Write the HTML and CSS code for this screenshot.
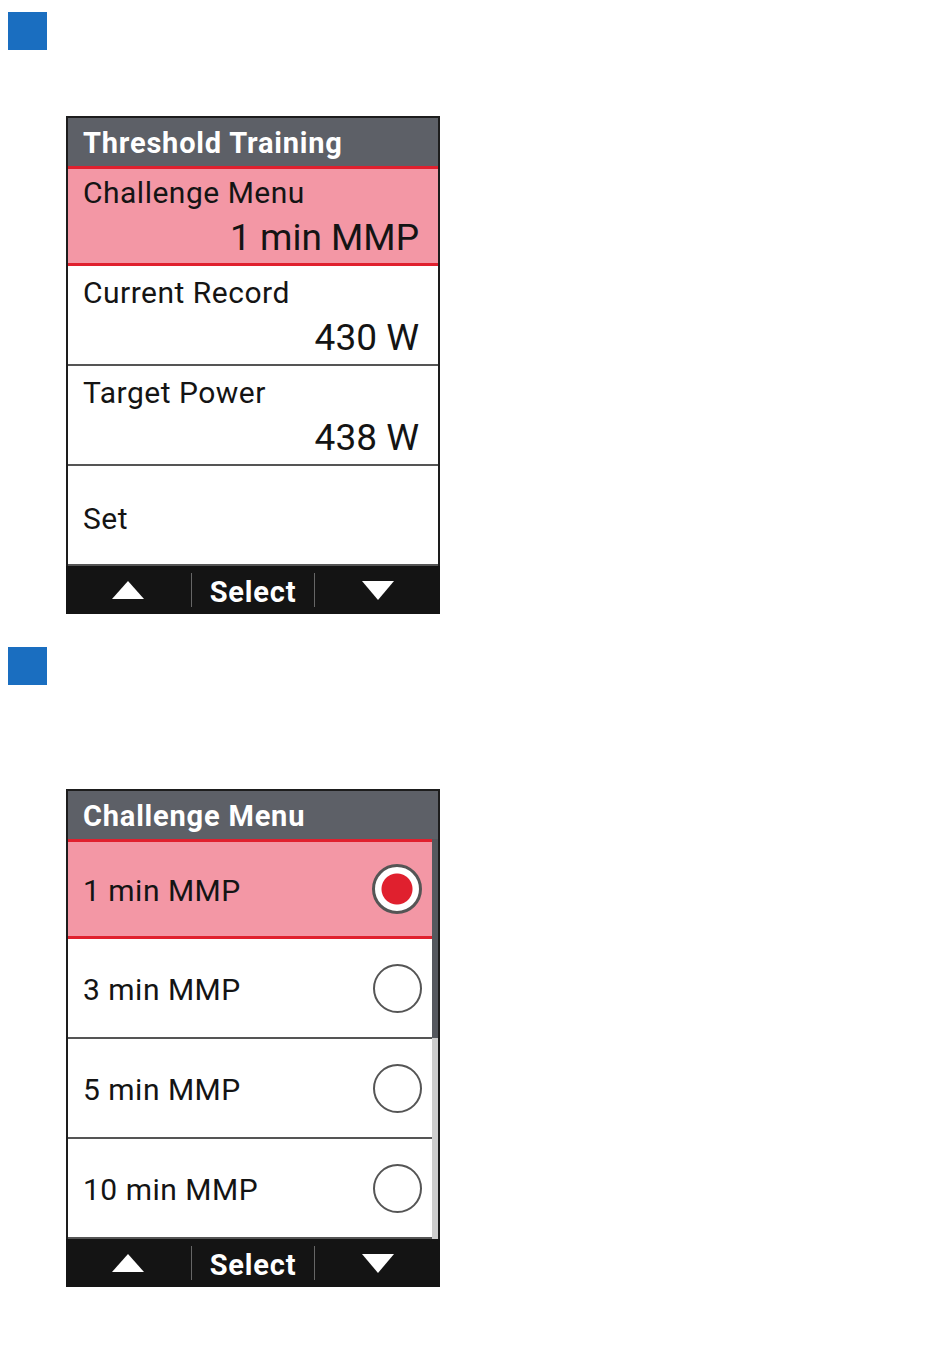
FILE: index.html
```html
<!DOCTYPE html>
<html>
<head>
    <title>Threshold Training</title>
    <link rel="stylesheet" href="styles.css">
</head>
<body>

    <!-- Step 1 -->
    <div class="step">
        <div class="marker"></div>
        <div class="screen first">
            <div class="title">Threshold Training</div>
            <div class="row selected">
                <div class="label">Challenge Menu</div>
                <div class="value">1 min MMP</div>
            </div>
            <div class="row">
                <div class="label">Current Record</div>
                <div class="value">430 W</div>
            </div>
            <div class="row">
                <div class="label">Target Power</div>
                <div class="value">438 W</div>
            </div>
            <div class="row single">
                <div class="label">Set</div>
            </div>
            <div class="footer">
                <div class="key"><span class="tri up"></span></div>
                <div class="key sep">Select</div>
                <div class="key"><span class="tri down"></span></div>
            </div>
        </div>
    </div>

    <!-- Step 2 -->
    <div class="step">
        <div class="marker"></div>
        <div class="screen second">
            <div class="title">Challenge Menu</div>
            <div class="list">
                <div class="row single selected">
                    <div class="label">1 min MMP</div>
                    <span class="radio on"></span>
                </div>
                <div class="row single">
                    <div class="label">3 min MMP</div>
                    <span class="radio"></span>
                </div>
                <div class="row single">
                    <div class="label">5 min MMP</div>
                    <span class="radio"></span>
                </div>
                <div class="row single">
                    <div class="label">10 min MMP</div>
                    <span class="radio"></span>
                </div>
                <div class="scrollbar"><div class="thumb"></div></div>
            </div>
            <div class="footer">
                <div class="key"><span class="tri up"></span></div>
                <div class="key sep">Select</div>
                <div class="key"><span class="tri down"></span></div>
            </div>
        </div>
    </div>

</body>
</html>
```

FILE: styles.css
```css
body {
    margin: 0;
    padding-top: 12px;
    background: #fff;
    font-family: Roboto, "Liberation Sans", sans-serif;
    color: #141414;
}
.marker {
    width: 39px;
    height: 38px;
    margin-left: 8px;
    background-color: #1a6ec0;
}
.screen {
    width: 370px;
    margin-left: 66px;
    border: 2px solid #1d1d1d;
    border-bottom: none;
    background: white;
}
.first {
    margin-top: 66px;
    margin-bottom: 33px;
}
.second {
    margin-top: 104px;
}
.title {
    height: 48px;
    box-sizing: border-box;
    padding: 8px 0 0 15px;
    background-color: #5d6067;
    color: white;
    font-weight: bold;
    font-size: 29px;
    line-height: 34px;
    letter-spacing: 0.8px;
}
.list {
    position: relative;
}
.row {
    height: 100px;
    box-sizing: border-box;
    padding: 0 19px 0 15px;
    border-bottom: 2px solid #555;
    font-size: 30px;
    letter-spacing: 0.5px;
}
.row .label {
    padding-top: 8px;
    line-height: 38px;
}
.row .value {
    margin-top: 3px;
    text-align: right;
    font-size: 37px;
    line-height: 46px;
    letter-spacing: 0;
}
.row.selected {
    background-color: #f397a5;
    border-top: 3px solid #e0202e;
    border-bottom: 3px solid #e0202e;
}
.row.selected .label {
    padding-top: 5px;
}
.row.single {
    display: flex;
    align-items: center;
    justify-content: space-between;
}
.row.single .label {
    padding-top: 4px;
}
.first .row.single .label {
    padding-top: 8px;
}
.second .row {
    padding-right: 16px;
}
.radio {
    width: 45px;
    height: 45px;
    border: 2px solid #555;
    border-radius: 50%;
    background: white;
}
.radio.on {
    box-sizing: border-box;
    width: 50px;
    height: 50px;
    border: 3px solid #555;
    background: radial-gradient(circle, #e0202e 0 15px, white 16px);
}
.scrollbar {
    position: absolute;
    top: 0;
    right: 0;
    width: 6px;
    height: 400px;
    background-color: #cdcdcd;
}
.scrollbar .thumb {
    height: 199px;
    background-color: #55585e;
}
.footer {
    display: grid;
    grid-template-columns: 1fr 1fr 1fr;
    height: 48px;
    margin: 0 -2px;
    background-color: #141414;
    align-items: center;
}
.key {
    display: flex;
    justify-content: center;
    align-items: center;
    height: 48px;
    color: white;
    font-weight: bold;
    font-size: 29px;
    letter-spacing: 0.8px;
}
.key.sep {
    box-sizing: border-box;
    height: 34px;
    padding-top: 4px;
    border-left: 1px solid #666;
    border-right: 1px solid #666;
}
.tri {
    width: 0;
    height: 0;
    border-left: 16px solid transparent;
    border-right: 16px solid transparent;
}
.tri.up {
    border-bottom: 18px solid white;
}
.tri.down {
    border-top: 19px solid white;
}
```
